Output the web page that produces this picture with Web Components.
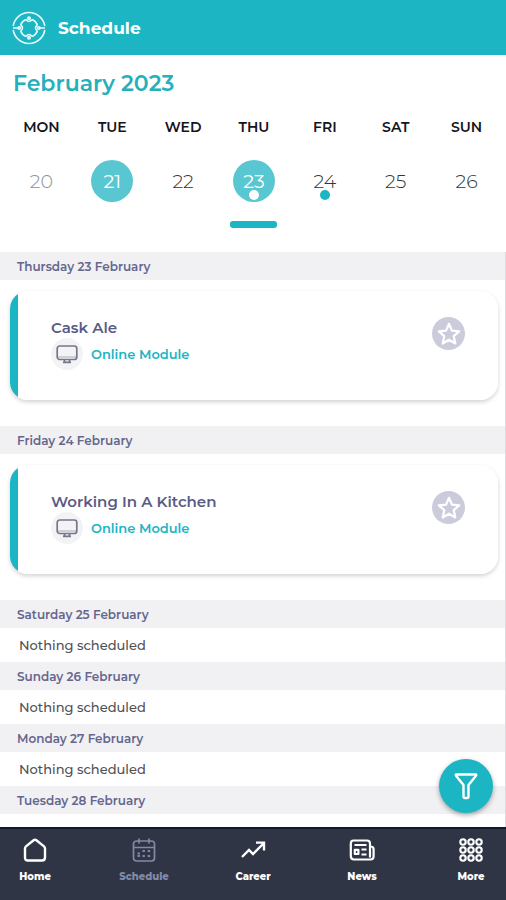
<!DOCTYPE html>
<html lang="en">
<head>
<meta charset="utf-8">
<meta name="viewport" content="width=device-width, initial-scale=1">
<title>Schedule</title>
<style>
  body {
    margin: 0;
    font-family: Montserrat, Inter, "Open Sans", sans-serif;
    background: #fff;
    --teal: #1bb5c3;
    --teal-soft: #58c7d2;
    --ink: #5a5b85;
    --band: #f1f1f4;
    --navy: #303545;
  }
</style>
</head>
<body>
<schedule-app>
  <app-header slot="header">Schedule</app-header>
  <week-picker slot="week" month="February 2023">
    <week-day name="Mon" date="20" past></week-day>
    <week-day name="Tue" date="21" filled></week-day>
    <week-day name="Wed" date="22"></week-day>
    <week-day name="Thu" date="23" filled dot selected></week-day>
    <week-day name="Fri" date="24" dot></week-day>
    <week-day name="Sat" date="25"></week-day>
    <week-day name="Sun" date="26"></week-day>
  </week-picker>
  <day-section heading="Thursday 23 February"><event-card kind="Online Module">Cask Ale</event-card></day-section>
  <day-section heading="Friday 24 February"><event-card kind="Online Module">Working In A Kitchen</event-card></day-section>
  <day-section heading="Saturday 25 February"><empty-day>Nothing scheduled</empty-day></day-section>
  <day-section heading="Sunday 26 February"><empty-day>Nothing scheduled</empty-day></day-section>
  <day-section heading="Monday 27 February"><empty-day>Nothing scheduled</empty-day></day-section>
  <day-section heading="Tuesday 28 February"></day-section>
  <filter-button slot="fab"></filter-button>
  <tab-bar slot="tabs">
    <tab-item icon="home">Home</tab-item>
    <tab-item icon="calendar" active>Schedule</tab-item>
    <tab-item icon="trend">Career</tab-item>
    <tab-item icon="news">News</tab-item>
    <tab-item icon="grid">More</tab-item>
  </tab-bar>
</schedule-app>

<script>
const ICONS = {
  home: '<path d="M2 10.5Q2 9.3 3 8.4L10.6 2.2Q12 1.2 13.4 2.2L21 8.4Q22 9.3 22 10.5V19.5Q22 22.5 19 22.5H5Q2 22.5 2 19.5Z" stroke-width="2.4"/>',
  calendar: '<rect x="1.5" y="3" width="21" height="20" rx="3"/><path d="M1.5 9.5H22.5M7 0.5V5.5M17 0.5V5.5"/><path d="M10.5 13h2.4M15.7 13h2.4M5.5 18h2.4M10.5 18h2.4M15.7 18h2.4M5.5 15.5h2.4" stroke-width="2.2"/>',
  trend: '<path d="M1 19L8 12L12 16L22 6M15 4.6H23V12.5" stroke-width="2.4" stroke-linejoin="miter"/>',
  news: '<path d="M20 19.5V5.5Q20 2.5 17 2.5H3.5Q.8 2.5 .8 5.5V18Q.8 21.5 4 21.5H20.5Q23.6 21.5 23.6 18.5V11Q23.6 8.5 20 8.5" stroke-width="2.2"/><path d="M4.5 7H16.5M11.5 11.5H16.5M11.5 16.5H16.5" stroke-width="2.2"/><rect x="4.8" y="11.8" width="3.6" height="4.2" stroke-width="2.2"/>',
  grid: [4, 12, 20].map(y => [4, 12, 20].map(x => `<circle cx="${x}" cy="${y}" r="2.7" stroke-width="2.1"/>`).join('')).join('')
};

function define(name, render) {
  customElements.define(name, class extends HTMLElement {
    constructor() {
      super();
      this.attachShadow({ mode: 'open' });
    }
    connectedCallback() {
      const template = document.createElement('template');
      template.innerHTML = render(this);
      this.shadowRoot.replaceChildren(template.content.cloneNode(true));
    }
  });
}

define('schedule-app', () => `
  <style>
    :host { display: flex; flex-direction: column; height: 100vh; }
    .body { position: relative; flex: 1; min-height: 0; display: flex; }
    main { flex: 1; overflow-y: auto; scrollbar-width: none; border-right: 1px solid #dcdce0; }
    ::slotted([slot=fab]) { position: absolute; right: 13px; bottom: 14px; }
  </style>
  <slot name="header"></slot>
  <slot name="week"></slot>
  <div class="body"><main><slot></slot></main><slot name="fab"></slot></div>
  <slot name="tabs"></slot>`);

define('app-header', () => `
  <style>
    header { display: flex; align-items: center; gap: 12px; height: 55px; padding: 0 12px; background: var(--teal); color: #fff; }
    svg { width: 34px; height: 34px; fill: none; stroke: #e4fbfc; stroke-width: 1.6; }
    h1 { margin: 0; font-size: 17px; line-height: 24px; font-weight: 700; }
  </style>
  <header>
    <svg viewBox="0 0 34 34" aria-hidden="true">
      <path d="M1.2 15A16 16 0 0 1 32.8 15M1.2 19A16 16 0 0 0 32.8 19"/>
      <path d="M1 17H6.2M27.8 17H33"/>
      <path d="M8.6 14A9 9 0 0 1 14 8.6M20 8.6A9 9 0 0 1 25.4 14M25.4 20A9 9 0 0 1 20 25.4M14 25.4A9 9 0 0 1 8.6 20"/>
      <path d="M14 8.6Q17 12.4 20 8.6M14 25.4Q17 21.6 20 25.4M8.6 14Q12.4 17 8.6 20M25.4 14Q21.6 17 25.4 20"/>
      <circle cx="17" cy="7.2" r="1.2"/><circle cx="17" cy="26.8" r="1.2"/>
      <circle cx="7.2" cy="17" r="1.2"/><circle cx="26.8" cy="17" r="1.2"/>
    </svg>
    <h1><slot></slot></h1>
  </header>`);

define('week-picker', el => `
  <style>
    section { padding: 14px 4px 24px 6px; }
    h2 { margin: 0 0 20px; padding: 0 7px; font-size: 22px; line-height: 30px; font-weight: 600; color: #26afbd; }
    .days { display: grid; grid-template-columns: repeat(7, 1fr); }
  </style>
  <section>
    <h2>${el.getAttribute('month')}</h2>
    <div class="days"><slot></slot></div>
  </section>`);

define('week-day', el => `
  <style>
    button { display: flex; flex-direction: column; align-items: center; width: 100%; padding: 0; border: 0; background: none; font: inherit; cursor: pointer; }
    .name { font-size: 14px; line-height: 16px; font-weight: 600; color: #14141c; text-transform: uppercase; }
    .date { position: relative; display: grid; place-items: center; width: 42px; height: 42px; margin-top: 25px; border-radius: 50%; font-size: 19px; font-weight: 300; color: #333338; }
    :host([past]) .date { color: #8f8f94; }
    :host([filled]) .date { background: var(--teal-soft); color: #fff; font-weight: 400; }
    :host([dot]) .date::after { content: ""; position: absolute; left: 16px; bottom: 2px; width: 10px; height: 10px; border-radius: 50%; background: var(--teal); }
    :host([dot][filled]) .date::after { background: #fff; }
    .bar { width: 47px; height: 7px; margin-top: 19px; border-radius: 3px; }
    :host([selected]) .bar { background: var(--teal); }
  </style>
  <button type="button"><span class="name">${el.getAttribute('name')}</span><span class="date">${el.getAttribute('date')}</span><span class="bar"></span></button>`);

define('day-section', el => `
  <style>
    :host { display: block; }
    h3 { margin: 0; padding: 2px 17px 0; background: var(--band); font-size: 12px; line-height: 26px; font-weight: 600; color: #65668d; }
  </style>
  <section><h3>${el.getAttribute('heading')}</h3><slot></slot></section>`);

define('empty-day', () => `
  <style>
    :host { display: block; padding: 0 19px; font-size: 13px; line-height: 34px; font-weight: 500; color: #505054; }
  </style>
  <slot></slot>`);

define('event-card', el => `
  <style>
    :host { display: block; padding: 11px 7px 26px 10px; }
    article { display: flex; align-items: flex-start; justify-content: space-between; min-height: 109px; box-sizing: border-box; padding: 26px 33px 20px 41px; border-radius: 18px; background: linear-gradient(90deg, var(--teal) 8px, #fff 8px); box-shadow: 0 2px 4px rgba(0, 0, 0, .18); }
    h4 { margin: 0; font-size: 15px; line-height: 21px; font-weight: 600; color: var(--ink); }
    .kind { display: flex; align-items: center; gap: 8px; font-size: 13px; line-height: 20px; font-weight: 600; color: var(--teal); }
    .badge { display: grid; place-items: center; width: 32px; height: 32px; border-radius: 50%; background: #f3f3f6; }
    .badge svg { width: 22px; height: 20px; fill: none; stroke: #77778a; stroke-width: 1.7; }
    button { display: grid; place-items: center; width: 33px; height: 33px; padding: 0; border: 0; border-radius: 50%; background: #cbccdb; cursor: pointer; }
    button svg { width: 24px; height: 24px; fill: none; stroke: #fff; stroke-width: 2.2; stroke-linejoin: round; }
  </style>
  <article>
    <div>
      <h4><slot></slot></h4>
      <div class="kind">
        <span class="badge"><svg viewBox="0 0 22 20" aria-hidden="true"><rect x="1.2" y="2" width="19.6" height="13.5" rx="2.5"/><path d="M2 13H20" stroke="#aaaab6" stroke-width="1"/><path d="M8.5 16V18.2M13.5 16V18.2M7 18.4H15"/></svg></span>
        <span>${el.getAttribute('kind')}</span>
      </div>
    </div>
    <button type="button" aria-label="Add to favourites"><svg viewBox="0 0 24 24"><path d="M12 1.8L14.9 8.6L22.2 9.3L16.7 14.1L18.3 21.5L12 17.7L5.7 21.5L7.3 14.1L1.8 9.3L9.1 8.6Z"/></svg></button>
  </article>`);

define('filter-button', () => `
  <style>
    :host { display: block; }
    button { display: grid; place-items: center; width: 54px; height: 54px; padding: 0; border: 0; border-radius: 50%; background: var(--teal); box-shadow: 0 2px 5px rgba(0, 0, 0, .35); cursor: pointer; }
    svg { width: 26px; height: 28px; fill: none; stroke: #fff; stroke-width: 2.4; stroke-linejoin: round; }
  </style>
  <button type="button" aria-label="Filter"><svg viewBox="0 0 26 28"><path d="M3.5 2.5H22.5Q23.8 2.5 23 3.7L15.5 13V24.5Q15.5 26 14 26H12Q10.5 26 10.5 24.5V13L3 3.7Q2.2 2.5 3.5 2.5Z"/></svg></button>`);

define('tab-bar', () => `
  <style>
    nav { display: flex; justify-content: space-between; height: 73px; box-sizing: border-box; border-top: 2px solid #111a2b; background: var(--navy); }
  </style>
  <nav aria-label="Main"><slot></slot></nav>`);

define('tab-item', el => `
  <style>
    :host { display: block; width: 70px; }
    a { display: flex; flex-direction: column; align-items: center; gap: 7px; padding-top: 9px; font-size: 10px; line-height: 16px; font-weight: 800; color: #fff; text-decoration: none; }
    :host([active]) a { color: #8289a8; }
    svg { width: 24px; height: 24px; fill: none; stroke: currentColor; stroke-width: 1.7; stroke-linejoin: round; overflow: visible; }
  </style>
  <a href="#${el.getAttribute('icon')}"${el.hasAttribute('active') ? ' aria-current="page"' : ''}><svg viewBox="0 0 24 24" aria-hidden="true">${ICONS[el.getAttribute('icon')]}</svg><span><slot></slot></span></a>`);
</script>
</body>
</html>
